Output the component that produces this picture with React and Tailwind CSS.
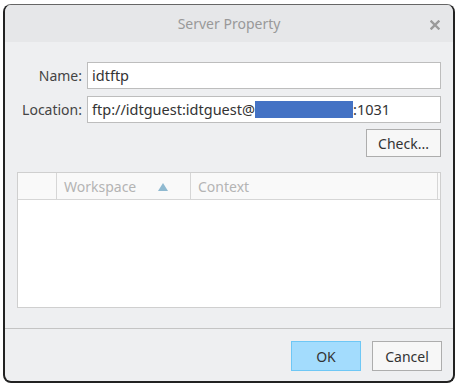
import React from "react";

export default function App() {
  const font = { fontFamily: "'Segoe UI', 'Noto Sans', sans-serif" };

  return (
    <div className="w-[459px] h-[388px] bg-white pt-[4px] pl-[3px]" style={font}>
      {/* Dialog frame */}
      <div className="w-[452px] h-[379px] rounded-[8px] border border-t-[#666] border-l-2 border-l-[#222] border-r-2 border-r-[#222] border-b-2 border-b-[#222] bg-[#eeeff1] overflow-hidden flex flex-col">
        {/* Title bar */}
        <div className="relative h-[37px] shrink-0 bg-[#e6e7e9] flex items-center justify-center">
          <span className="text-[14px] text-[#999]">Server Property</span>
          <svg className="absolute right-[13px] top-[15px]" width="10" height="10" viewBox="0 0 10 10">
            <path d="M1.5 1.5 L8.5 8.5 M8.5 1.5 L1.5 8.5" stroke="#9a9a9a" strokeWidth="2.4" strokeLinecap="square" />
          </svg>
        </div>

        {/* Body */}
        <div className="flex-1 flex flex-col pl-[12px] pr-[12px] pt-[20px]">
          <div className="flex items-center h-[27px]">
            <label className="w-[70px] pr-[5px] text-right text-[14px] text-[#444]">Name:</label>
            <div className="flex-1 h-[27px] bg-white border border-[#bdbdbd] flex items-center px-[4px] text-[14.5px] text-[#333]">
              idtftp
            </div>
          </div>
          <div className="flex items-center h-[27px] mt-[7px]">
            <label className="w-[70px] pr-[5px] text-right text-[14px] text-[#444]">Location:</label>
            <div className="flex-1 h-[27px] bg-white border border-[#bdbdbd] flex items-center px-[4px] text-[14.5px] text-[#333] whitespace-nowrap">
              <span>ftp://idtguest:idtguest@</span>
              <span className="inline-block w-[98px] h-[17px] bg-[#4472c4]" />
              <span>:1031</span>
            </div>
          </div>
          <div className="flex justify-end mt-[6px]">
            <button className="w-[75px] h-[28px] bg-[#f7f7f7] border border-[#adadad] text-[14px] text-[#333]">
              Check...
            </button>
          </div>

          {/* Table */}
          <div className="mt-[15px] h-[136px] bg-white border border-[#cfcfcf] flex flex-col">
            <div className="h-[27px] bg-[#f9f9f9] border-b border-[#d6d6d6] flex text-[14px] text-[#b4b4b4]">
              <div className="w-[39px] border-r border-[#d6d6d6]" />
              <div className="w-[134px] border-r border-[#d6d6d6] flex items-center pl-[7px] relative">
                Workspace
                <svg className="absolute left-[101px] top-[10px]" width="10" height="8" viewBox="0 0 10 8">
                  <path d="M5 0 L10 8 L0 8 Z" fill="#8fb9d0" />
                </svg>
              </div>
              <div className="flex-1 border-r border-[#d6d6d6] mr-[2px] flex items-center pl-[7px]">Context</div>
            </div>
            <div className="flex-1" />
          </div>
        </div>

        {/* Footer */}
        <div className="h-[53px] shrink-0 border-t border-[#c4c4c4] flex justify-end items-start pt-[12px] pr-[11px] gap-[11px]">
          <button className="w-[70px] h-[30px] bg-[#a3dcfd] border border-[#6ec7f5] text-[14px] text-[#333]">OK</button>
          <button className="w-[70px] h-[30px] bg-[#f7f7f7] border border-[#adadad] text-[14px] text-[#333]">Cancel</button>
        </div>
      </div>
    </div>
  );
}
